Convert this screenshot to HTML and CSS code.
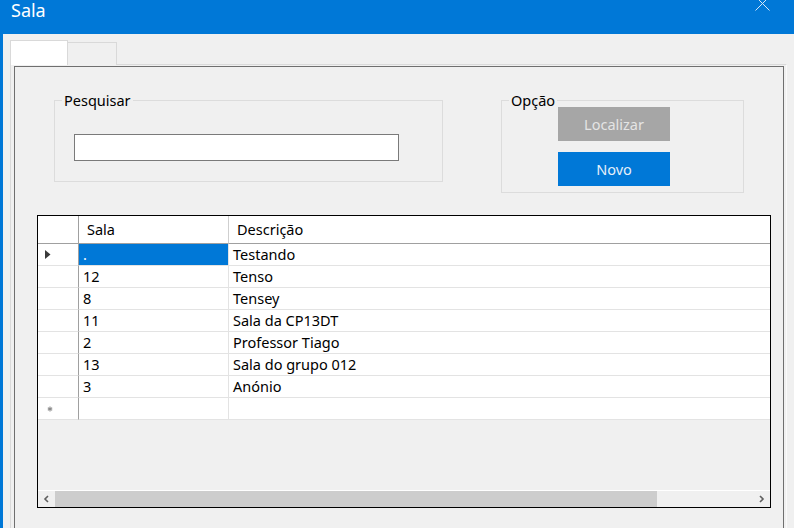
FILE: index.html
```html
<!DOCTYPE html>
<html lang="pt">
<head>
<meta charset="utf-8">
<title>Sala</title>
<link rel="stylesheet" href="styles.css">
</head>
<body>
<div class="window">
  <header class="titlebar">
    <span class="title">Sala</span>
    <svg class="close" width="15" height="15" viewBox="0 0 15 15"><path d="M0.5 0.5 L14.5 14.5 M14.5 0.5 L0.5 14.5" stroke="#d4e7f8" stroke-width="1" fill="none"/></svg>
  </header>
  <div class="tabs">
    <div class="tabstrip">
      <div class="tab tab-active"></div>
      <div class="tab"></div>
    </div>
    <div class="tabpage">
      <div class="panel">
        <div class="groups">
          <fieldset class="group group-search">
            <legend>Pesquisar</legend>
            <input class="search" type="text">
          </fieldset>
          <fieldset class="group group-option">
            <legend>Opção</legend>
            <div class="buttons">
              <button class="btn btn-disabled">Localizar</button>
              <button class="btn btn-primary">Novo</button>
            </div>
          </fieldset>
        </div>
        <div class="grid">
          <div class="grid-head">
            <div class="hc hc-corner"></div>
            <div class="hc hc-sala">Sala</div>
            <div class="hc">Descrição</div>
          </div>
          <div class="grid-row">
            <div class="rh"><svg width="6" height="9" viewBox="0 0 6 9"><polygon points="0,0 5.5,4.5 0,9" fill="#3a3a3a"/></svg></div>
            <div class="c c-sala c-selected">.</div>
            <div class="c">Testando</div>
          </div>
          <div class="grid-row"><div class="rh"></div><div class="c c-sala">12</div><div class="c">Tenso</div></div>
          <div class="grid-row"><div class="rh"></div><div class="c c-sala">8</div><div class="c">Tensey</div></div>
          <div class="grid-row"><div class="rh"></div><div class="c c-sala">11</div><div class="c">Sala da CP13DT</div></div>
          <div class="grid-row"><div class="rh"></div><div class="c c-sala">2</div><div class="c">Professor Tiago</div></div>
          <div class="grid-row"><div class="rh"></div><div class="c c-sala">13</div><div class="c">Sala do grupo 012</div></div>
          <div class="grid-row"><div class="rh"></div><div class="c c-sala">3</div><div class="c">Anónio</div></div>
          <div class="grid-row">
            <div class="rh rh-new"><svg width="6" height="6" viewBox="0 0 6 6"><path d="M3 0.5 V5.5 M0.8 1.7 L5.2 4.3 M5.2 1.7 L0.8 4.3" stroke="#8c8c8c" stroke-width="1.1"/></svg></div>
            <div class="c c-sala"></div>
            <div class="c"></div>
          </div>
          <div class="grid-fill"></div>
          <div class="hscroll">
            <div class="sb-btn"><svg width="7" height="8" viewBox="0 0 7 8"><polyline points="5,1 2,4 5,7" fill="none" stroke="#606060" stroke-width="1.6"/></svg></div>
            <div class="sb-thumb"></div>
            <div class="sb-track"></div>
            <div class="sb-btn"><svg width="7" height="8" viewBox="0 0 7 8"><polyline points="2,1 5,4 2,7" fill="none" stroke="#606060" stroke-width="1.6"/></svg></div>
          </div>
        </div>
      </div>
    </div>
  </div>
</div>
</body>
</html>
```
FILE: styles.css
```css
html, body {
  margin: 0;
  padding: 0;
}
body {
  width: 794px;
  height: 528px;
  overflow: hidden;
  background: #f0f0f0;
  font-family: "Noto Sans", "Open Sans", sans-serif;
  font-size: 14.5px;
  color: #000;
}
.window {
  height: 528px;
  box-sizing: border-box;
  border-left: 3px solid #0078d7;
}
.titlebar {
  height: 34px;
  background: #0078d7;
  display: flex;
  align-items: flex-start;
}
.title {
  color: #ffffff;
  font-size: 18px;
  line-height: 20px;
  padding-left: 8px;
}
.close {
  margin-left: auto;
  margin-right: 24px;
  margin-top: -4px;
}
.tabs {
  padding-left: 7px;
  padding-top: 6px;
}
.tabstrip {
  display: flex;
  align-items: flex-end;
  height: 25px;
  margin-bottom: -1px;
}
.tab {
  box-sizing: border-box;
  width: 50px;
  height: 23px;
  border: 1px solid #d9d9d9;
  border-bottom: none;
  background: #f0f0f0;
}
.tab-active {
  position: relative;
  z-index: 1;
  width: 58px;
  height: 25px;
  background: #ffffff;
  margin-right: -1px;
}
.tabpage {
  box-sizing: border-box;
  width: 777px;
  height: 480px;
  border: 1px solid #dadada;
  border-right-color: #fafafa;
  padding: 1px 2px 0 3px;
}
.panel {
  box-sizing: border-box;
  width: 770px;
  height: 470px;
  border: 1px solid #6f6f6f;
}
.groups {
  display: flex;
  align-items: flex-start;
  gap: 58px;
  margin-top: 26px;
  padding-left: 39px;
}
.group {
  box-sizing: border-box;
  margin: 0;
  min-width: 0;
  border: 1px solid #dcdcdc;
  padding-left: 0;
  padding-right: 0;
}
.group legend {
  font-size: 14.5px;
  line-height: 15px;
  padding: 0 2px;
  margin-left: 7px;
}
.group-search {
  width: 389px;
  padding-top: 26px;
  padding-bottom: 20px;
}
.group-option {
  width: 243px;
  padding-top: 0;
  padding-bottom: 6px;
}
.search {
  display: block;
  box-sizing: border-box;
  width: 325px;
  height: 27px;
  margin: 0 0 0 19px;
  border: 1px solid #7a7a7a;
  background: #fff;
}
.buttons {
  display: flex;
  flex-direction: column;
  gap: 11px;
  margin: -1px 0 0 56px;
}
.btn {
  width: 112px;
  height: 34px;
  border: none;
  margin: 0;
  padding: 0;
  font-family: inherit;
  font-size: 14.5px;
}
.btn-disabled {
  background: #a6a6a6;
  color: #e4e4e4;
}
.btn-primary {
  background: #0078d7;
  color: #e6f0fa;
}
.grid {
  box-sizing: border-box;
  width: 734px;
  height: 293px;
  margin: 22px 0 0 22px;
  border: 1px solid #000;
  background: #f0f0f0;
  display: flex;
  flex-direction: column;
}
.grid-head,
.grid-row {
  display: grid;
  grid-template-columns: 41px 150px 1fr;
  background: #fff;
}
.grid-head {
  height: 28px;
}
.hc {
  border-bottom: 1px solid #a0a0a0;
  line-height: 27px;
  padding-left: 8px;
  white-space: nowrap;
}
.hc-corner {
  border-right: 1px solid #a0a0a0;
}
.hc-sala {
  border-right: 1px solid #cfcfcf;
}
.grid-row {
  height: 22px;
}
.rh,
.c {
  border-bottom: 1px solid #e3e3e3;
  line-height: 21px;
  white-space: nowrap;
}
.rh {
  border-right: 1px solid #a0a0a0;
  display: flex;
  align-items: center;
  padding-left: 7px;
}
.rh-new {
  padding-left: 9px;
}
.c {
  padding-left: 4px;
}
.c-sala {
  border-right: 1px solid #e3e3e3;
}
.c-selected {
  background: #0078d7;
  color: #fff;
}
.grid-fill {
  flex: 1;
}
.hscroll {
  height: 17px;
  box-sizing: border-box;
  border-top: 1px solid #ffffff;
  display: flex;
  background: #f0f0f0;
}
.sb-btn {
  width: 17px;
  display: flex;
  align-items: center;
  justify-content: center;
}
.sb-thumb {
  width: 602px;
  background: #cdcdcd;
}
.sb-track {
  flex: 1;
}
```
